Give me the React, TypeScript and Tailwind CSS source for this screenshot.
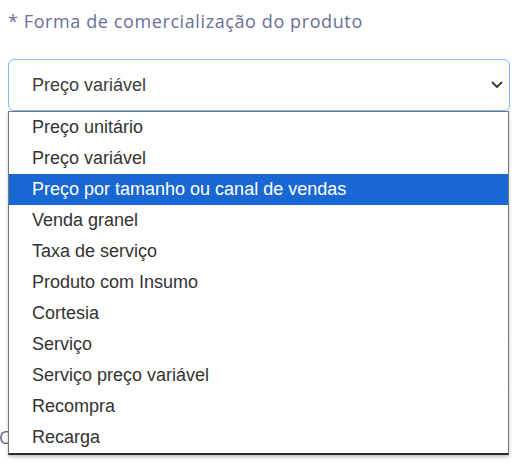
import React from "react";

const options = [
  "Preço unitário",
  "Preço variável",
  "Preço por tamanho ou canal de vendas",
  "Venda granel",
  "Taxa de serviço",
  "Produto com Insumo",
  "Cortesia",
  "Serviço",
  "Serviço preço variável",
  "Recompra",
  "Recarga",
];

const selectedIndex = 2;

export default function App() {
  return (
    <div className="relative w-[519px] h-[467px] overflow-hidden bg-white">
      <div className="pl-2 pr-[9px] pt-[8px]">
        <label
          className="block text-[18px] leading-[26px] tracking-[0.6px] text-[#6a6f99]"
          style={{ fontFamily: '"Open Sans", "Noto Sans", sans-serif' }}
        >
          * Forma de comercialização do produto
        </label>

        <div className="relative mt-[25px]">
          {/* select box */}
          <div
            className="flex h-[52px] items-center justify-between rounded-[6px] border border-[#86b7fe] pl-[23px] pr-[6px] text-[18px] text-[#3d3d3d]"
            style={{ fontFamily: '"Liberation Sans", Arial, sans-serif' }}
          >
            <span>Preço variável</span>
            <svg width="12" height="8" viewBox="0 0 12 8" fill="none">
              <path
                d="M1.5 1.5 6 6l4.5-4.5"
                stroke="#343a40"
                strokeWidth="1.8"
                strokeLinecap="round"
                strokeLinejoin="round"
              />
            </svg>
          </div>

          {/* background content hidden behind the open list */}
          <div className="mt-[225px] h-[52px] border-t border-[#e3e5ef]" />
          <div className="border-t border-[#e3e5ef]" />
          <div
            className="-ml-[9px] mt-[38px] text-[18px] leading-[20px] text-[#6a6f99]"
            style={{ fontFamily: '"Open Sans", "Noto Sans", sans-serif' }}
          >
            C
          </div>

          {/* open dropdown list */}
          <ul
            className="absolute left-0 right-px top-[52px] border border-b-2 border-[#767676] border-b-[#2b2b2b] bg-white text-[18px] text-[#333333] shadow-[0_2px_3px_rgba(0,0,0,0.25)]"
            style={{ fontFamily: '"Liberation Sans", Arial, sans-serif' }}
          >
            {options.map((o, i) => (
              <li
                key={o}
                className={
                  i === selectedIndex
                    ? "flex h-[31px] items-center bg-[#1967d2] pl-[23px] text-white"
                    : "flex h-[31px] items-center pl-[23px]"
                }
              >
                {o}
              </li>
            ))}
          </ul>
        </div>
      </div>
    </div>
  );
}
